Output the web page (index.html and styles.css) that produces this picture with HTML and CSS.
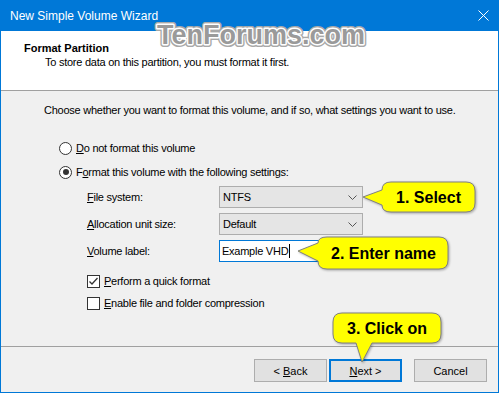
FILE: index.html
```html
<!DOCTYPE html>
<html lang="en">
<head>
    <meta charset="UTF-8">
    <title>New Simple Volume Wizard</title>
    <link rel="stylesheet" href="styles.css">
</head>
<body>

    <div class="window">
        <div class="titlebar">
            <span>New Simple Volume Wizard</span>
            <svg class="close" width="11" height="11" viewBox="0 0 11 11">
                <path d="M0.5 0.5 L10.5 10.5 M10.5 0.5 L0.5 10.5" stroke="#fff" stroke-width="1"/>
            </svg>
        </div>

        <div class="header">
            <div class="header-title">Format Partition</div>
            <div class="header-sub">To store data on this partition, you must format it first.</div>
        </div>

        <div class="content">
            <p class="intro">Choose whether you want to format this volume, and if so, what settings you want to use.</p>

            <div class="option first">
                <span class="radio"></span>
                <span><u>D</u>o not format this volume</span>
            </div>
            <div class="option">
                <span class="radio checked"></span>
                <span>F<u>o</u>rmat this volume with the following settings:</span>
            </div>

            <div class="settings">
                <span><u>F</u>ile system:</span>
                <div class="combo">
                    <span>NTFS</span>
                    <svg width="9" height="5" viewBox="0 0 9 5"><path d="M0.5 0.5 L4.5 4.5 L8.5 0.5" fill="none" stroke="#555"/></svg>
                </div>

                <span><u>A</u>llocation unit size:</span>
                <div class="combo">
                    <span>Default</span>
                    <svg width="9" height="5" viewBox="0 0 9 5"><path d="M0.5 0.5 L4.5 4.5 L8.5 0.5" fill="none" stroke="#555"/></svg>
                </div>

                <span><u>V</u>olume label:</span>
                <div class="textbox">Example VHD<span class="caret"></span></div>
            </div>

            <div class="check first">
                <span class="box">
                    <svg width="11" height="11" viewBox="0 0 11 11"><path d="M1.5 5.5 L4 8 L9.5 2" fill="none" stroke="#333" stroke-width="1.3"/></svg>
                </span>
                <span><u>P</u>erform a quick format</span>
            </div>
            <div class="check">
                <span class="box"></span>
                <span><u>E</u>nable file and folder compression</span>
            </div>
        </div>

        <div class="footer">
            <button class="btn">&lt; <u>B</u>ack</button>
            <button class="btn default"><u>N</u>ext &gt;</button>
            <button class="btn cancel">Cancel</button>
        </div>
    </div>

    <!-- watermark and callouts drawn over the dialog -->
    <svg class="overlay" width="499" height="393" viewBox="0 0 499 393">
        <text class="mark-back" x="157" y="44" textLength="208" lengthAdjust="spacingAndGlyphs">TenForums.com</text>
        <text class="mark" x="157" y="44" textLength="208" lengthAdjust="spacingAndGlyphs">TenForums.com</text>

        <g class="callout">
            <path d="M391 182 H466 Q475 182 475 191 V203 Q475 212 466 212 H391 Q382 212 382 205 L363 197 L382 190 Q382 182 391 182 Z"/>
            <text x="428.5" y="203">1. Select</text>
        </g>
        <g class="callout">
            <path d="M327 237 H439 Q448 237 448 246 V260 Q448 269 439 269 H327 Q318 269 318 261 L298 251 L318 243 Q318 237 327 237 Z"/>
            <text x="383.5" y="259">2. Enter name</text>
        </g>
        <g class="callout">
            <path d="M342 313 H432 Q441 313 441 322 V334 Q441 343 432 343 H372 L362 362 L356 343 H342 Q333 343 333 334 V322 Q333 313 342 313 Z"/>
            <text x="387" y="334">3. Click on</text>
        </g>
    </svg>

</body>
</html>
```

FILE: styles.css
```css
body {
    margin: 0;
    width: 499px;
    height: 393px;
    overflow: hidden;
    position: relative;
    font-family: 'Liberation Sans', Arial, sans-serif;
    font-size: 11px;
    color: #000;
}

.window {
    box-sizing: border-box;
    width: 499px;
    height: 393px;
    border: 1px solid #0078d7;
    border-top: 0;
    background-color: #f0f0f0;
    display: flex;
    flex-direction: column;
}

.titlebar {
    height: 31px;
    flex: none;
    background-color: #0078d7;
    color: #fff;
    font-size: 12px;
    display: flex;
    align-items: center;
    justify-content: space-between;
    padding: 0 9px;
}

.header {
    box-sizing: border-box;
    height: 60px;
    flex: none;
    background-color: #fff;
    border-bottom: 1px solid #a0a0a0;
    padding: 10px 0 0 23px;
    line-height: 14px;
}

.header-title {
    font-weight: bold;
}

.header-sub {
    padding-left: 21px;
    letter-spacing: -0.25px;
}

.content {
    flex: 1;
    padding: 12px 0 0 43px;
    letter-spacing: -0.25px;
}

.intro {
    margin: 0;
    line-height: 14px;
}

.option {
    display: flex;
    align-items: center;
    gap: 4px;
    height: 20px;
    margin: 4px 0 0 15px;
}

.option.first {
    margin-top: 21px;
}

.radio {
    box-sizing: border-box;
    width: 13px;
    height: 13px;
    border: 1px solid #333;
    border-radius: 50%;
    background-color: #fff;
    display: flex;
    align-items: center;
    justify-content: center;
}

.radio.checked::after {
    content: "";
    width: 6px;
    height: 6px;
    border-radius: 50%;
    background-color: #333;
}

.settings {
    display: grid;
    grid-template-columns: 132px 144px;
    grid-auto-rows: 22px;
    row-gap: 5px;
    align-items: center;
    margin: 4px 0 0 43px;
}

.combo {
    box-sizing: border-box;
    height: 22px;
    background-color: #e5e5e5;
    border: 1px solid #adadad;
    display: flex;
    align-items: center;
    justify-content: space-between;
    padding: 0 5px 0 3px;
}

.textbox {
    box-sizing: border-box;
    height: 22px;
    background-color: #fff;
    border: 1px solid #0078d7;
    display: flex;
    align-items: center;
    padding-left: 2px;
}

.caret {
    display: inline-block;
    width: 1px;
    height: 14px;
    margin-left: 1px;
    background-color: #000;
}

.check {
    display: flex;
    align-items: center;
    gap: 4px;
    height: 20px;
    margin: 2px 0 0 43px;
}

.check.first {
    margin-top: 9px;
}

.box {
    box-sizing: border-box;
    width: 13px;
    height: 13px;
    border: 1px solid #333;
    background-color: #fff;
    display: flex;
}

.footer {
    box-sizing: border-box;
    height: 46px;
    flex: none;
    border-top: 1px solid #a0a0a0;
    display: flex;
    justify-content: flex-end;
    align-items: flex-start;
    gap: 2px;
    padding: 12px 11px 0 0;
}

.btn {
    box-sizing: border-box;
    width: 73px;
    height: 23px;
    margin: 0;
    padding: 0;
    border: 1px solid #adadad;
    background-color: #e1e1e1;
    font: inherit;
    color: #000;
}

.btn.default {
    border: 2px solid #0078d7;
}

.btn.cancel {
    margin-left: 10px;
}

.overlay {
    position: absolute;
    left: 0;
    top: 0;
}

.mark-back,
.mark {
    font-family: 'Liberation Sans', Arial, sans-serif;
    font-weight: bold;
    font-size: 28px;
}

.mark-back {
    fill: #a8a8a8;
    stroke: #a8a8a8;
    stroke-width: 6px;
    stroke-linejoin: round;
}

.mark {
    fill: #9a9a9a;
    stroke: #fff;
    stroke-width: 3px;
    stroke-linejoin: round;
    paint-order: stroke;
}

.callout path {
    fill: #ffff00;
    stroke: #808080;
    stroke-width: 1px;
    filter: drop-shadow(1px 1px 1px rgba(0, 0, 0, 0.3));
}

.callout text {
    font-family: 'Liberation Sans', Arial, sans-serif;
    font-weight: bold;
    font-size: 16px;
    text-anchor: middle;
    fill: #000;
}
```
